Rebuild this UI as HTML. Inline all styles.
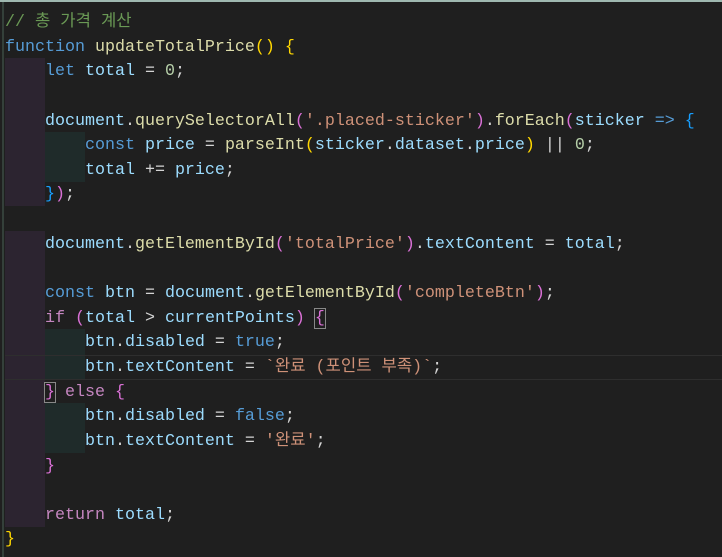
<!DOCTYPE html>
<html><head><meta charset="utf-8"><style>
html,body{margin:0;padding:0;}
body{width:722px;height:557px;background:#1f1f1f;position:relative;overflow:hidden;}
.top{position:absolute;left:0;top:0;width:722px;height:2px;background:#9fb8b0;}
.lb{position:absolute;left:2px;top:2px;width:2px;height:555px;background:#34403a;}
.g{position:absolute;}
.code{position:absolute;left:5px;top:11px;font-family:"Liberation Mono","Noto Sans CJK KR",monospace;font-size:16.67px;line-height:24.65px;color:#d4d4d4;}
.l{height:24.65px;white-space:pre;}
.c{color:#6a9955}.k{color:#569cd6}.f{color:#dcdcaa}.v{color:#9cdcfe}.n{color:#b5cea8}.s{color:#ce9178}.ctl{color:#c586c0}
.b1{color:#ffd700}.b2{color:#da70d6}.b3{color:#179fff}
.box{outline:1px solid #888;}
</style></head><body>
<div class="top"></div>
<div class="lb"></div>
<div class="g" style="left:5px;top:58.3px;width:40px;height:147.9px;background:#2c2430"></div>
<div class="g" style="left:5px;top:230.8px;width:40px;height:295.8px;background:#2c2430"></div>
<div class="g" style="left:45px;top:132.3px;width:40px;height:49.3px;background:#1f2b2a"></div>
<div class="g" style="left:45px;top:329.4px;width:40px;height:49.3px;background:#1f2b2a"></div>
<div class="g" style="left:45px;top:403.4px;width:40px;height:49.3px;background:#1f2b2a"></div>
<div class="g" style="left:5px;top:354.5px;width:717px;height:23px;border-top:1px solid #2e2e2e;border-bottom:1px solid #2e2e2e"></div>
<div class="code"><div class="l"><span class="c">// 총 가격 계산</span></div><div class="l"><span class="k">function</span> <span class="f">updateTotalPrice</span><span class="b1">()</span> <span class="b1">{</span></div><div class="l">    <span class="k">let</span> <span class="v">total</span> = <span class="n">0</span>;</div><div class="l"> </div><div class="l">    <span class="v">document</span>.<span class="f">querySelectorAll</span><span class="b2">(</span><span class="s">'.placed-sticker'</span><span class="b2">)</span>.<span class="f">forEach</span><span class="b2">(</span><span class="v">sticker</span> <span class="k">=&gt;</span> <span class="b3">{</span></div><div class="l">        <span class="k">const</span> <span class="v">price</span> = <span class="f">parseInt</span><span class="b1">(</span><span class="v">sticker</span>.<span class="v">dataset</span>.<span class="v">price</span><span class="b1">)</span> || <span class="n">0</span>;</div><div class="l">        <span class="v">total</span> += <span class="v">price</span>;</div><div class="l">    <span class="b3">}</span><span class="b2">)</span>;</div><div class="l"> </div><div class="l">    <span class="v">document</span>.<span class="f">getElementById</span><span class="b2">(</span><span class="s">'totalPrice'</span><span class="b2">)</span>.<span class="v">textContent</span> = <span class="v">total</span>;</div><div class="l"> </div><div class="l">    <span class="k">const</span> <span class="v">btn</span> = <span class="v">document</span>.<span class="f">getElementById</span><span class="b2">(</span><span class="s">'completeBtn'</span><span class="b2">)</span>;</div><div class="l">    <span class="ctl">if</span> <span class="b2">(</span><span class="v">total</span> &gt; <span class="v">currentPoints</span><span class="b2">)</span> <span class="b2 box">{</span></div><div class="l">        <span class="v">btn</span>.<span class="v">disabled</span> = <span class="k">true</span>;</div><div class="l">        <span class="v">btn</span>.<span class="v">textContent</span> = <span class="s">`완료 (포인트 부족)`</span>;</div><div class="l">    <span class="b2 box">}</span> <span class="ctl">else</span> <span class="b2">{</span></div><div class="l">        <span class="v">btn</span>.<span class="v">disabled</span> = <span class="k">false</span>;</div><div class="l">        <span class="v">btn</span>.<span class="v">textContent</span> = <span class="s">'완료'</span>;</div><div class="l">    <span class="b2">}</span></div><div class="l"> </div><div class="l">    <span class="ctl">return</span> <span class="v">total</span>;</div><div class="l"><span class="b1">}</span></div></div>
</body></html>
